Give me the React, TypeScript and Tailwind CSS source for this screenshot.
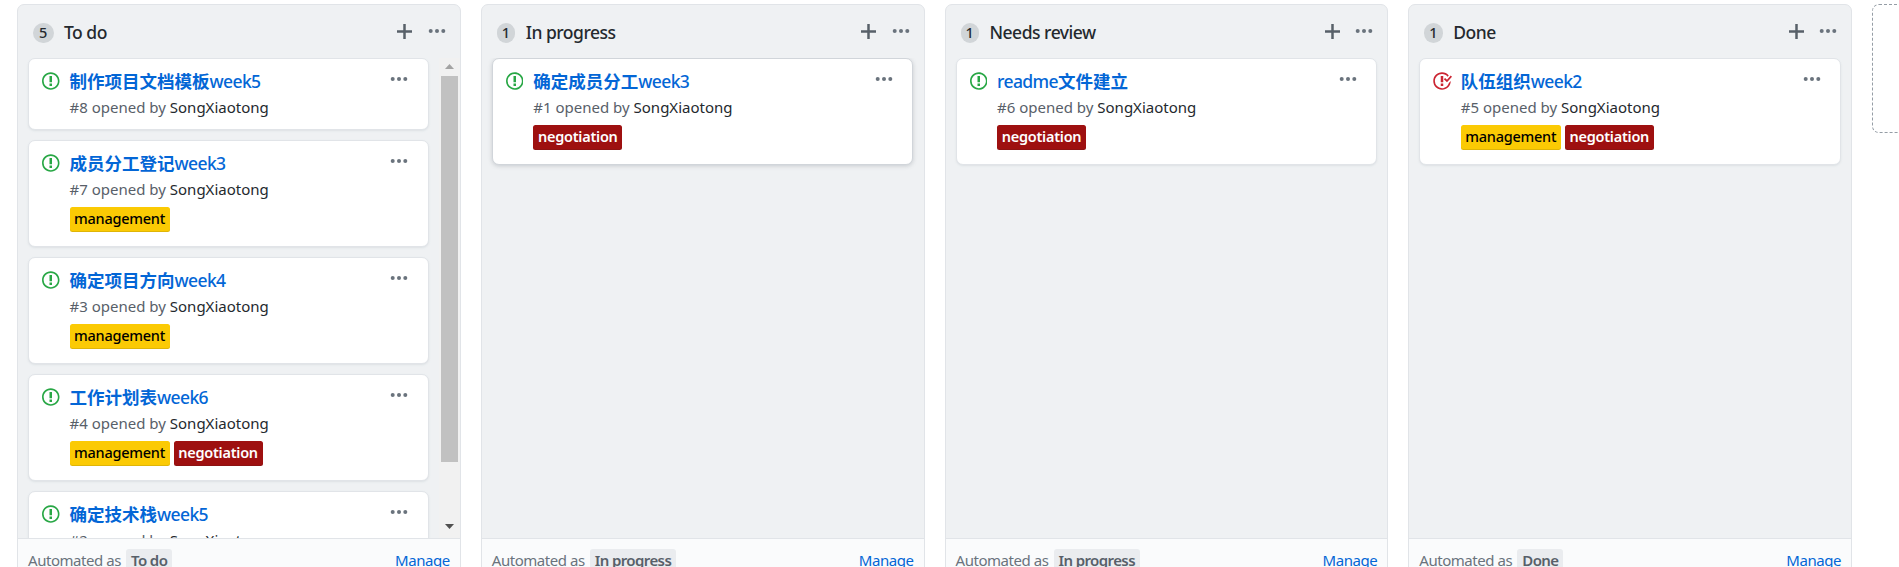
import React from "react";

type LabelName = "management" | "negotiation";

interface Issue {
  title: string;
  number: number;
  labels?: LabelName[];
  closed?: boolean;
  active?: boolean;
}

interface BoardColumn {
  name: string;
  preset: string;
  count: number;
  issues: Issue[];
  scroll?: boolean;
}

const columns: BoardColumn[] = [
  {
    name: "To do",
    preset: "To do",
    count: 5,
    scroll: true,
    issues: [
      { title: "制作项目文档模板week5", number: 8 },
      { title: "成员分工登记week3", number: 7, labels: ["management"] },
      { title: "确定项目方向week4", number: 3, labels: ["management"] },
      { title: "工作计划表week6", number: 4, labels: ["management", "negotiation"] },
      { title: "确定技术栈week5", number: 2 },
    ],
  },
  {
    name: "In progress",
    preset: "In progress",
    count: 1,
    issues: [{ title: "确定成员分工week3", number: 1, labels: ["negotiation"], active: true }],
  },
  {
    name: "Needs review",
    preset: "In progress",
    count: 1,
    issues: [{ title: "readme文件建立", number: 6, labels: ["negotiation"] }],
  },
  {
    name: "Done",
    preset: "Done",
    count: 1,
    issues: [{ title: "队伍组织week2", number: 5, labels: ["management", "negotiation"], closed: true }],
  },
];

function OpenIcon() {
  return (
    <svg width="17.5" height="20" viewBox="0 0 14 16" className="shrink-0 fill-[#28a745]">
      <path
        fillRule="evenodd"
        d="M7 2.3c3.14 0 5.7 2.56 5.7 5.7s-2.56 5.7-5.7 5.7A5.71 5.71 0 011.3 8c0-3.14 2.56-5.7 5.7-5.7zM7 1C3.14 1 0 4.14 0 8s3.14 7 7 7 7-3.14 7-7-3.14-7-7-7zm1 3H6v5h2V4zm0 6H6v2h2v-2z"
      />
    </svg>
  );
}

function ClosedIcon() {
  return (
    <svg width="20" height="20" viewBox="0 0 16 16" className="-ml-px shrink-0 fill-[#cb2431]">
      <path
        fillRule="evenodd"
        d="M7 10h2v2H7v-2zm2-6H7v5h2V4zm1.5 1.5l-1 1L12 9l4-4.5-1-1L12 7l-1.5-1.5zM8 13.7A5.71 5.71 0 012.3 8c0-3.14 2.56-5.7 5.7-5.7 1.83 0 3.45.88 4.5 2.2l.92-.92A6.947 6.947 0 008 1C4.14 1 1 4.14 1 8s3.14 7 7 7 7-3.14 7-7l-1.52 1.52c-.66 2.41-2.86 4.19-5.48 4.19v-.01z"
      />
    </svg>
  );
}

function Dots() {
  return (
    <svg width="18" height="6" viewBox="0 0 18 6" className="block fill-[#6a737d]">
      <circle cx="2.7" cy="3" r="2" />
      <circle cx="9" cy="3" r="2" />
      <circle cx="15.3" cy="3" r="2" />
    </svg>
  );
}

function PlusIcon() {
  return (
    <svg width="15" height="15" viewBox="0 0 15 15" className="block fill-[#586069]">
      <path d="M6.25 0h2.5v6.25H15v2.5H8.75V15h-2.5V8.75H0v-2.5h6.25z" />
    </svg>
  );
}

function IssueLabel({ name }: { name: LabelName }) {
  return name === "management" ? (
    <span className="flex h-[25px] w-[100px] items-center justify-center rounded-[2.5px] bg-[#fbca04] text-[14.5px] font-medium tracking-[-0.25px] text-black shadow-[inset_0_-1px_0_rgba(27,31,35,0.12)]">
      {name}
    </span>
  ) : (
    <span className="flex h-[25px] w-[89px] items-center justify-center rounded-[2.5px] bg-[#9e1010] text-[14.5px] font-semibold tracking-[-0.25px] text-white shadow-[inset_0_-1px_0_rgba(27,31,35,0.12)]">
      {name}
    </span>
  );
}

function Card({ issue, narrow }: { issue: Issue; narrow?: boolean }) {
  return (
    <article
      className={
        "flex shrink-0 rounded-[7px] border bg-white pl-[13px] " +
        (narrow ? "pr-[19.5px] " : "pr-[19px] ") +
        (issue.labels ? "h-[107px] " : "h-[72px] ") +
        (issue.active
          ? "border-[#d1d5da] shadow-[0_1px_4px_rgba(106,115,125,0.3)]"
          : "border-[#e1e4e8] shadow-[0_1px_2px_rgba(209,213,218,0.6)]")
      }
    >
      <div className="w-[27.5px] shrink-0 pt-[12px]">{issue.closed ? <ClosedIcon /> : <OpenIcon />}</div>
      <div className="flex min-w-0 flex-1 flex-col pt-[9px]">
        <h3 className="h-[27px] whitespace-nowrap text-[17.5px] font-medium leading-[27px] tracking-[-0.6px] text-[#0366d6]">
          {issue.title.split(/([a-z0-9]+)/).map((part, i) => (
            <span key={i} className={/^[a-z0-9]+$/.test(part) ? "" : "font-bold tracking-normal"}>
              {part}
            </span>
          ))}
        </h3>
        <p className="h-[25px] whitespace-nowrap text-[15px] leading-[25px] tracking-normal text-[#586069]">
          #{issue.number} opened by <span className="text-[#24292e]">SongXiaotong</span>
        </p>
        {issue.labels && (
          <div className="mt-[4.5px] flex gap-[4px]">
            {issue.labels.map((l) => (
              <IssueLabel key={l} name={l} />
            ))}
          </div>
        )}
      </div>
      <button className="h-[6px] shrink-0 pt-[17px]">
        <Dots />
      </button>
    </article>
  );
}

function Scrollbar() {
  return (
    <div className="flex w-[21px] shrink-0 flex-col items-center bg-[#f1f1f1]">
      <svg width="9" height="5" viewBox="0 0 9 5" className="mt-[6px] block fill-[#a3a3a3]">
        <path d="M4.5 0L9 5H0z" />
      </svg>
      <div className="mt-[7px] h-[386px] w-[17px] bg-[#c1c1c1]" />
      <svg width="9" height="5" viewBox="0 0 9 5" className="mb-[9px] mt-auto block fill-[#505050]">
        <path d="M0 0h9L4.5 5z" />
      </svg>
    </div>
  );
}

function Column({ column }: { column: BoardColumn }) {
  return (
    <section className="flex h-[600px] w-[443.75px] shrink-0 flex-col overflow-hidden rounded-[7px] border border-[#e1e4e8] bg-[#eff1f3]">
      <header className="flex h-[53px] shrink-0 items-start pl-[15px] pr-[14px]">
        <span
          className={
            "mt-[18px] flex h-[20px] items-center justify-center rounded-full bg-[#d1d5d8] text-[14.5px] font-medium text-[#24292e] " +
            (column.count > 1 ? "w-[20.5px]" : "w-[18.5px]")
          }
        >
          {column.count}
        </span>
        <h2 className="ml-[10.5px] mt-[13px] text-[17.5px] font-medium leading-[28px] tracking-[-0.5px] text-[#24292e]">
          {column.name}
        </h2>
        <button className="ml-auto mt-[18.5px]">
          <PlusIcon />
        </button>
        <button className="ml-[15.5px] mt-[23px]">
          <Dots />
        </button>
      </header>
      <div className="flex h-[480px] shrink-0 overflow-hidden">
        <div className={"flex min-w-0 flex-1 flex-col gap-[10px] pl-[10px] " + (column.scroll ? "pr-[10px]" : "pr-[10.5px]")}>
          {column.issues.map((issue) => (
            <Card key={issue.number} issue={issue} narrow={column.scroll} />
          ))}
        </div>
        {column.scroll && <Scrollbar />}
      </div>
      <footer className="flex h-[66px] shrink-0 items-start border-t border-[#e1e4e8] bg-[#fafbfc] px-[10px] pt-[10px] text-[15px] leading-[23px] tracking-[-0.45px] text-[#6a737d]">
        <span>Automated as</span>
        <span className="ml-[5px] rounded-[3px] bg-[#eaecef] px-[5px] font-semibold tracking-[-0.6px] text-[#586069]">
          {column.preset}
        </span>
        <a className="ml-auto text-[#0366d6]">Manage</a>
      </footer>
    </section>
  );
}

export default function App() {
  return (
    <main className="flex h-screen gap-5 overflow-hidden bg-white pl-[17px] pt-1 font-['Noto_Sans','Noto_Sans_CJK_SC',sans-serif]">
      {columns.map((c) => (
        <Column key={c.name} column={c} />
      ))}
      <div className="h-[129px] w-[443.75px] shrink-0 rounded-[7px] border border-dashed border-[#959da5]" />
    </main>
  );
}
